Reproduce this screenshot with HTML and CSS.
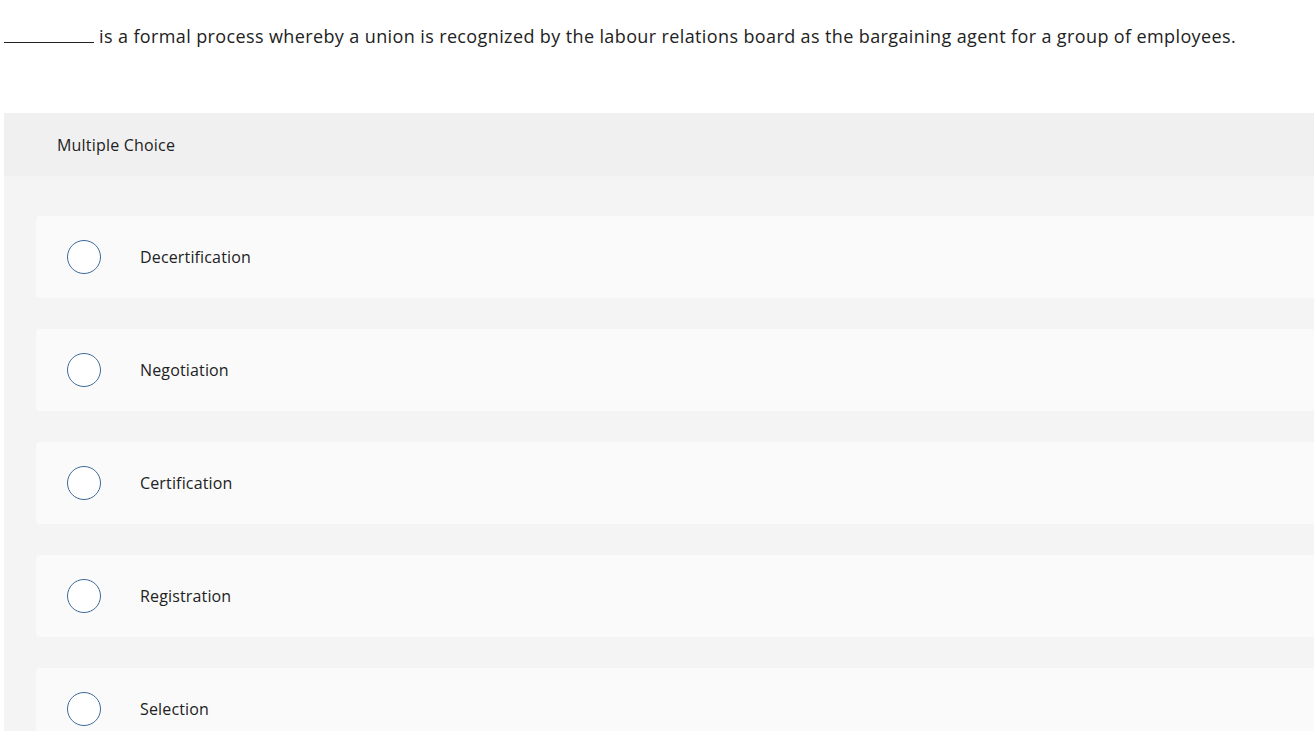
FILE: index.html
```html
<!DOCTYPE html>
<html>
<head>
<meta charset="utf-8">
<link rel="stylesheet" href="styles.css">
</head>
<body>
<div class="page">
  <p class="question"><span class="blank"></span> is a formal process whereby a union is recognized by the labour relations board as the bargaining agent for a group of employees.</p>
  <section class="panel">
    <header class="panel-head">Multiple Choice</header>
    <div class="options">
      <label class="option"><span class="radio"></span><span class="label">Decertification</span></label>
      <label class="option"><span class="radio"></span><span class="label">Negotiation</span></label>
      <label class="option"><span class="radio"></span><span class="label">Certification</span></label>
      <label class="option"><span class="radio"></span><span class="label">Registration</span></label>
      <label class="option"><span class="radio"></span><span class="label">Selection</span></label>
    </div>
  </section>
</div>
</body>
</html>
```
FILE: styles.css
```css
html, body {
  margin: 0;
  padding: 0;
  background: #ffffff;
  overflow: hidden;
}
body {
  font-family: "Open Sans", "Liberation Sans", sans-serif;
  color: #222222;
}
.page {
  width: 1346px;
  padding-left: 4px;
}
.question {
  margin: 0;
  padding-top: 24px;
  height: 113px;
  box-sizing: border-box;
  font-size: 18px;
  letter-spacing: 0.38px;
  line-height: 24px;
  color: #222;
}
.blank {
  display: inline-block;
  width: 90px;
  border-bottom: 1px solid #222;
  vertical-align: baseline;
}
.panel {
  background: #f4f4f4;
  padding-bottom: 40px;
}
.panel-head {
  background: #f0f0f0;
  height: 63px;
  padding-left: 53px;
  display: flex;
  align-items: center;
  font-size: 16px;
  letter-spacing: 0.2px;
  color: #222;
}
.options {
  padding: 40px 32px 0 32px;
  display: flex;
  flex-direction: column;
  gap: 31px;
}
.option {
  background: #fafafa;
  border-radius: 4px;
  height: 82px;
  display: flex;
  align-items: center;
  padding-left: 31px;
}
.radio {
  width: 32px;
  height: 32px;
  border: 1.5px solid #3d6a98;
  border-radius: 50%;
  background: #fff;
  flex: none;
}
.label {
  margin-left: 39px;
  font-size: 16px;
  letter-spacing: 0.15px;
  color: #222;
}
```
